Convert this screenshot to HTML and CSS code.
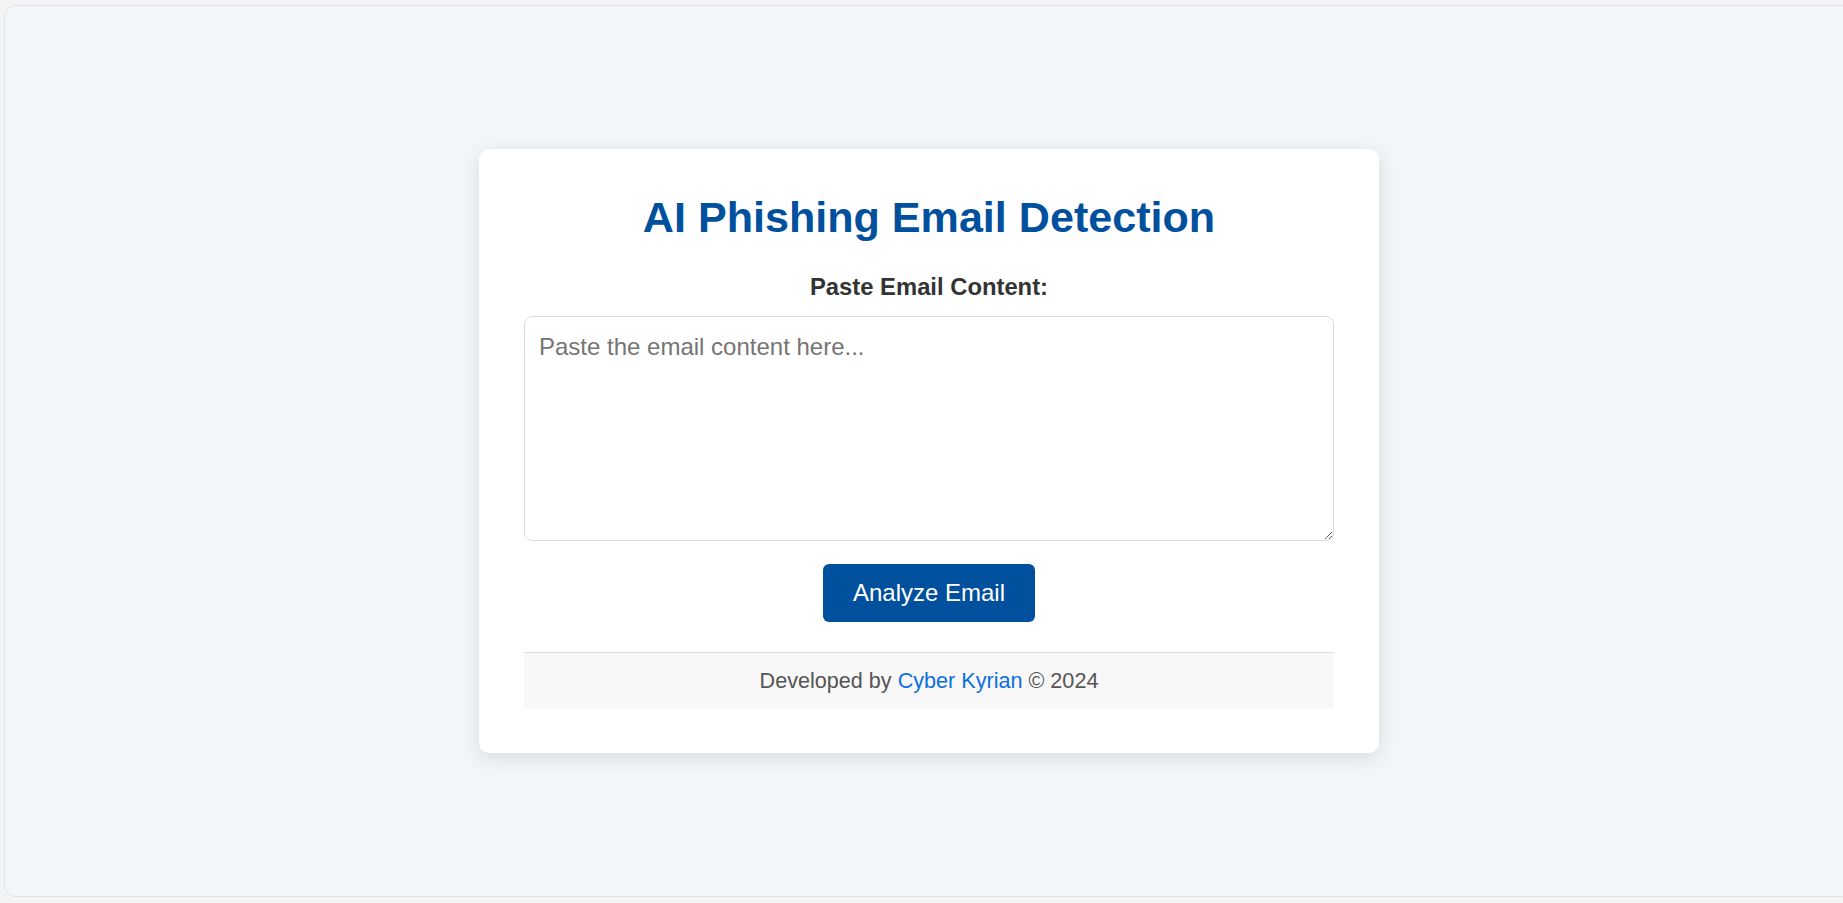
FILE: index.html
```html
<!DOCTYPE html>
<html lang="en">
<head>
<meta charset="utf-8">
<title>AI Phishing Email Detection</title>
<link rel="stylesheet" href="styles.css">
</head>
<body>
<div class="frame">
  <div class="card">
    <h1 class="title">AI Phishing Email Detection</h1>
    <label class="label" for="email">Paste Email Content:</label>
    <textarea id="email" class="input" placeholder="Paste the email content here..."></textarea>
    <button class="btn" type="button">Analyze Email</button>
    <footer class="footer">Developed by <a class="link" href="#">Cyber Kyrian</a> &copy; 2024</footer>
  </div>
</div>
</body>
</html>
```
FILE: styles.css
```css
* { box-sizing: border-box; }
html, body { margin: 0; height: 903px; overflow: hidden; }
body {
  background: #f4f4f4;
  padding: 5px 0 0 4px;
  font-family: "Liberation Sans", Arial, sans-serif;
}
.frame {
  width: 1850px;
  height: 892px;
  background: #f3f6f9;
  border: 1px solid #dfe3e7;
  border-radius: 12px;
  display: flex;
  align-items: center;
  justify-content: center;
}
.card {
  width: 900px;
  background: #fff;
  border-radius: 10px;
  box-shadow: 0 5px 20px rgba(0, 0, 0, 0.11);
  padding: 44px 45px 44px;
  display: flex;
  flex-direction: column;
  align-items: center;
}
.title {
  margin: 0;
  font-size: 43.1px;
  font-weight: bold;
  color: #00509d;
  line-height: 49px;
  text-align: center;
}
.label {
  margin-top: 31px;
  font-size: 23.8px;
  font-weight: bold;
  color: #333;
  line-height: 27px;
}
.input {
  display: block;
  margin-top: 16px;
  width: 100%;
  height: 225px;
  border: 1px solid #dcdcdc;
  border-radius: 8px;
  padding: 16px 14px;
  font-family: "Liberation Sans", Arial, sans-serif;
  font-size: 24px;
  color: #333;
  resize: vertical;
  outline: none;
}
.input::placeholder { color: #757575; }
.btn {
  margin-top: 23px;
  background: #00509d;
  color: #fff;
  border: none;
  border-radius: 6px;
  padding: 15px 30px;
  font-family: "Liberation Sans", Arial, sans-serif;
  font-size: 24px;
  line-height: 28px;
  cursor: pointer;
}
.footer {
  margin-top: 30px;
  width: 100%;
  background: #f8f8f8;
  border-top: 1px solid #dddddd;
  padding: 15px 0 16px;
  font-size: 21.6px;
  line-height: 25px;
  color: #555;
  text-align: center;
}
.link { color: #0a70e0; text-decoration: none; }
```
